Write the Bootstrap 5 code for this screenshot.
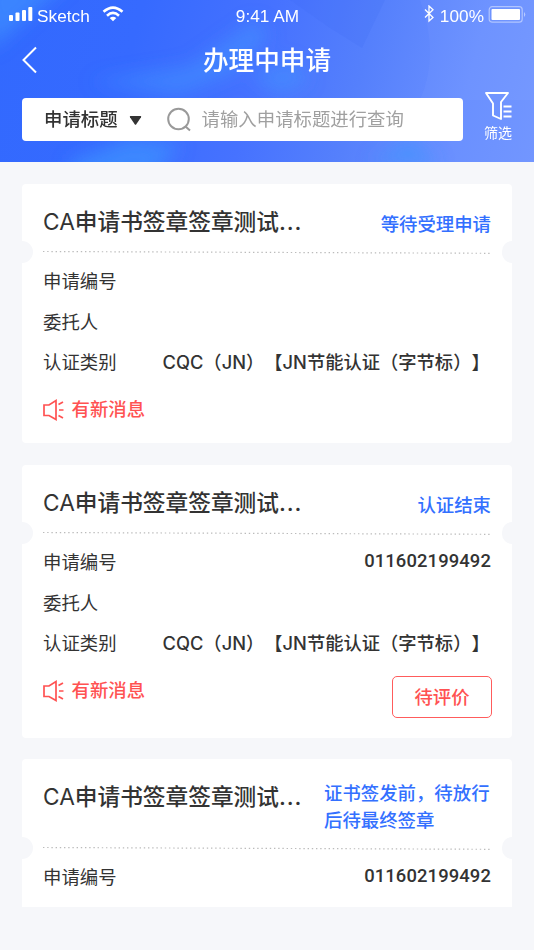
<!DOCTYPE html>
<html lang="zh-CN">
<head>
<meta charset="utf-8">
<meta name="viewport" content="width=device-width, initial-scale=1">
<title>办理中申请</title>
<link href="https://cdn.jsdelivr.net/npm/bootstrap@5.3.0/dist/css/bootstrap.min.css" rel="stylesheet">
<style>
body{background:#f6f7fa;color:#333;font-family:Inter,"Noto Sans CJK SC",sans-serif;font-size:18.4px;height:950px;overflow:hidden;text-spacing-trim:space-all}
svg{display:block;flex:none}
.app-head{height:162px;position:relative;z-index:0;background:linear-gradient(105deg,#3269fe 0%,#366aff 25%,#4672ff 48%,#5580fc 66%,#6a90ff 85%,#7296ff 100%)}
.glow{position:absolute;inset:0;z-index:-1}
.status-bar{height:31px;font-family:"Liberation Sans",sans-serif;font-size:17.2px;line-height:20px;padding:5px 8px 0 9px;letter-spacing:.05px}
.status-bar span{padding-top:.5px}
.status-bar>div{flex:1 1 0}
.title-bar{height:58px;padding:0 22px}
.title-bar h1{font-size:25.6px;font-weight:500;line-height:58px;padding-top:2px}
.title-bar .side{width:30px}
.search-line{padding:9px 21px 0 22px}
.search-box{width:441px;height:43px;border-radius:4px;color:#333;padding:1px 0 0 22px}
.caret{margin-left:11px}
.lens{margin:0 10px 0 25px}
.hint{color:#a0a0a0;margin-left:-1px}
.filter{width:30px;font-size:14px;line-height:20px;margin-top:-7px}
.filter span{padding-top:1px}
.feed{padding-top:22px}
.ticket{border-radius:4px;height:259px;margin:0 22px 22px}
.ticket.rated{height:273px;margin-bottom:21px}
.ticket.last{height:148px;border-radius:4px 4px 0 0}
.ticket-head{height:68px;padding:22.5px 21px 0}
.ticket-head.tall{height:89px}
.ticket-head h2{font-size:22.7px;line-height:30px;font-weight:500}
.ticket-head .latin{font-weight:400}
.ticket-head .dots{letter-spacing:.9px}
.state{color:#3370ff;line-height:27px;font-weight:500}
.down{padding-top:4px}
.up{margin-top:-1.5px;width:167px}
.tear{height:0;position:relative}
.tear svg{position:absolute;left:21px;top:-2px}
.notch{position:absolute;top:-11px;left:0;width:10.5px;height:22px;background:#f6f7fa;border-radius:0 11px 11px 0}
.notch.end{left:auto;right:0;border-radius:11px 0 0 11px}
.ticket-body{padding:9.6px 21px 0}
.item{height:40.5px}
.item .name{width:119.5px}
.item .val{font-weight:500;white-space:nowrap;font-size:18.3px}
.num{font-family:Roboto,sans-serif;font-weight:500;font-size:18.4px;letter-spacing:.12px;padding-bottom:5px}
.news{color:#ff5252;height:54px}
.news span{margin-left:6.5px}
.rate{width:100px;height:42px;border:1.5px solid #ff5c5c;border-radius:5px;color:#ff5252;font-size:18.4px;font-weight:500;margin:12.4px -1px 0 0;padding:0}
</style>
<script src="https://cdn.jsdelivr.net/npm/bootstrap@5.3.0/dist/js/bootstrap.bundle.min.js"></script>
</head>
<body>
<header class="app-head text-white">
 <svg class="glow" width="534" height="162" viewBox="0 0 534 162">
  <defs><filter id="soft" x="-30%" y="-60%" width="160%" height="220%"><feGaussianBlur stdDeviation="9"/></filter></defs>
  <g filter="url(#soft)" fill="#3f96ff"><path d="M-20-20H70L-10 50Z" opacity=".6"/><path d="M90 82L190 66L255 20L270 35L235 72L180 95Z" opacity=".5"/><path d="M70 162L130 138L180 145L150 180H70Z" opacity=".65"/><path d="M250 75L290 60L310 80L280 95Z" opacity=".5"/><path d="M370 162L410 140L440 165Z" opacity=".7"/></g>
  <path d="M290 0H385L362 48L330 28Z" fill="#3f6af5" opacity=".18"/>
  <path d="M420 0Q440 55 420 100H534V0Z" fill="#fff" opacity=".03"/>
 </svg>
 <div class="status-bar d-flex align-items-start">
  <div class="d-flex">
   <svg width="24" height="20" viewBox="0 0 24 20" fill="#fff"><rect x="0" y="10" width="4" height="6" rx="1"/><rect x="6.500" y="7.500" width="4" height="8.500" rx="1"/><rect x="13" y="5" width="4" height="11" rx="1"/><rect x="19.300" y="2" width="4" height="14" rx="1"/></svg>
   <span class="ms-1">Sketch</span>
   <svg class="ms-2" width="30" height="20" viewBox="0 0 30 20" fill="none" stroke="#fff" stroke-width="2.600"><path d="M5.500 6.800Q15-1.600 24.500 6.800M9 10.700Q15 5.200 21 10.700"/><path d="M11.700 13Q15 10.500 18.300 13L15 16.200Z" fill="#fff" stroke="none"/></svg>
  </div>
  <span>9:41 AM</span>
  <div class="d-flex justify-content-end">
   <svg width="12" height="19" viewBox="0 0 12 19" fill="none" stroke="#fff" stroke-width="1.300"><path d="M1 4.500L9 12.500L5 16V1L9 4.700L1 12.500"/></svg>
   <span class="ms-1 me-1">100%</span>
   <svg width="38" height="20" viewBox="0 0 38 20"><rect x="1.200" y="1.700" width="33" height="15.500" rx="3" fill="none" stroke="#fff" stroke-opacity=".45" stroke-width="1.200"/><rect x="3.500" y="4" width="28.500" height="11" rx="1" fill="#fff"/><path d="M36 7Q38.500 9.500 36 12Z" fill="#fff" opacity=".5"/></svg>
  </div>
 </div>
 <div class="title-bar d-flex align-items-center justify-content-between">
  <div class="side"><svg width="16" height="28" viewBox="0 0 16 28" fill="none" stroke="#fff" stroke-width="2"><path d="M14 1.500L1.500 14L14 26.500"/></svg></div>
  <h1 class="m-0">办理中申请</h1>
  <div class="side"></div>
 </div>
 <div class="search-line d-flex justify-content-between">
  <div class="search-box bg-white d-flex align-items-center">
   <span class="fw-medium">申请标题</span>
   <svg class="caret" width="13" height="11" viewBox="0 0 13 11" fill="#333"><path d="M1.500 1H11.500Q12.600 1 12 2.200L7.300 9.300Q6.500 10.300 5.700 9.300L1 2.200Q.4 1 1.500 1Z"/></svg>
   <svg class="lens" width="26" height="26" viewBox="0 0 26 26" fill="none" stroke="#999" stroke-width="2"><circle cx="11.500" cy="12" r="10.300"/><path d="M18.500 19.500L23 23.500"/></svg>
   <span class="hint">请输入申请标题进行查询</span>
  </div>
  <div class="filter d-flex flex-column align-items-center">
   <svg width="28" height="31" viewBox="0 0 28 31" fill="none" stroke="#fff" stroke-width="1.900" stroke-linejoin="round"><path d="M2 2H24L17 11V28L9 24.500V12.500Z"/><path d="M19.500 15.500H27.500M19.500 20.500H27.500M19.500 25.500H27.500"/></svg>
   <span class="text-nowrap">筛选</span>
  </div>
 </div>
</header>
<main class="feed">
 <article class="ticket bg-white">
  <div class="ticket-head d-flex justify-content-between"><h2 class="m-0"><span class="latin">CA</span>申请书签章签章测试<span class="dots">...</span></h2><span class="state down">等待受理申请</span></div>
  <div class="tear"><i class="notch"></i><i class="notch end"></i><svg width="448" height="4"><path d="M0 1.500L447 3.300" stroke="#bbb" stroke-width="1.200" stroke-dasharray="1.400 2.800"/></svg></div>
  <div class="ticket-body">
   <div class="item d-flex align-items-center"><span class="name">申请编号</span></div>
   <div class="item d-flex align-items-center"><span class="name">委托人</span></div>
   <div class="item d-flex align-items-center"><span class="name">认证类别</span><span class="val">CQC（JN）【JN节能认证（字节标）】</span></div>
   <div class="news d-flex align-items-center"><svg width="22" height="24" viewBox="0 0 22 24" fill="none" stroke="#ff5252" stroke-width="1.700"><path d="M1 7H6L13 2.500V21.500L6 17.500H1Z"/><path d="M15.500 6.500L20 4M16 12H20.500M15.500 17.500L20 20"/></svg><span class="fw-medium">有新消息</span></div>
  </div>
 </article>
 <article class="ticket rated bg-white">
  <div class="ticket-head d-flex justify-content-between"><h2 class="m-0"><span class="latin">CA</span>申请书签章签章测试<span class="dots">...</span></h2><span class="state down">认证结束</span></div>
  <div class="tear"><i class="notch"></i><i class="notch end"></i><svg width="448" height="4"><path d="M0 1.500L447 3.300" stroke="#bbb" stroke-width="1.200" stroke-dasharray="1.400 2.800"/></svg></div>
  <div class="ticket-body">
   <div class="item d-flex align-items-center justify-content-between"><span class="name">申请编号</span><span class="num">011602199492</span></div>
   <div class="item d-flex align-items-center"><span class="name">委托人</span></div>
   <div class="item d-flex align-items-center"><span class="name">认证类别</span><span class="val">CQC（JN）【JN节能认证（字节标）】</span></div>
   <div class="d-flex justify-content-between"><div class="news d-flex align-items-center"><svg width="22" height="24" viewBox="0 0 22 24" fill="none" stroke="#ff5252" stroke-width="1.700"><path d="M1 7H6L13 2.500V21.500L6 17.500H1Z"/><path d="M15.500 6.500L20 4M16 12H20.500M15.500 17.500L20 20"/></svg><span class="fw-medium">有新消息</span></div><button class="btn rate">待评价</button></div>
  </div>
 </article>
 <article class="ticket last bg-white">
  <div class="ticket-head tall d-flex justify-content-between"><h2 class="m-0"><span class="latin">CA</span>申请书签章签章测试<span class="dots">...</span></h2><span class="state up">证书签发前，待放行后待最终签章</span></div>
  <div class="tear"><i class="notch"></i><i class="notch end"></i><svg width="448" height="4"><path d="M0 1.500L447 3.300" stroke="#bbb" stroke-width="1.200" stroke-dasharray="1.400 2.800"/></svg></div>
  <div class="ticket-body">
   <div class="item d-flex align-items-center justify-content-between"><span class="name">申请编号</span><span class="num">011602199492</span></div>
  </div>
 </article>
</main>
</body>
</html>
